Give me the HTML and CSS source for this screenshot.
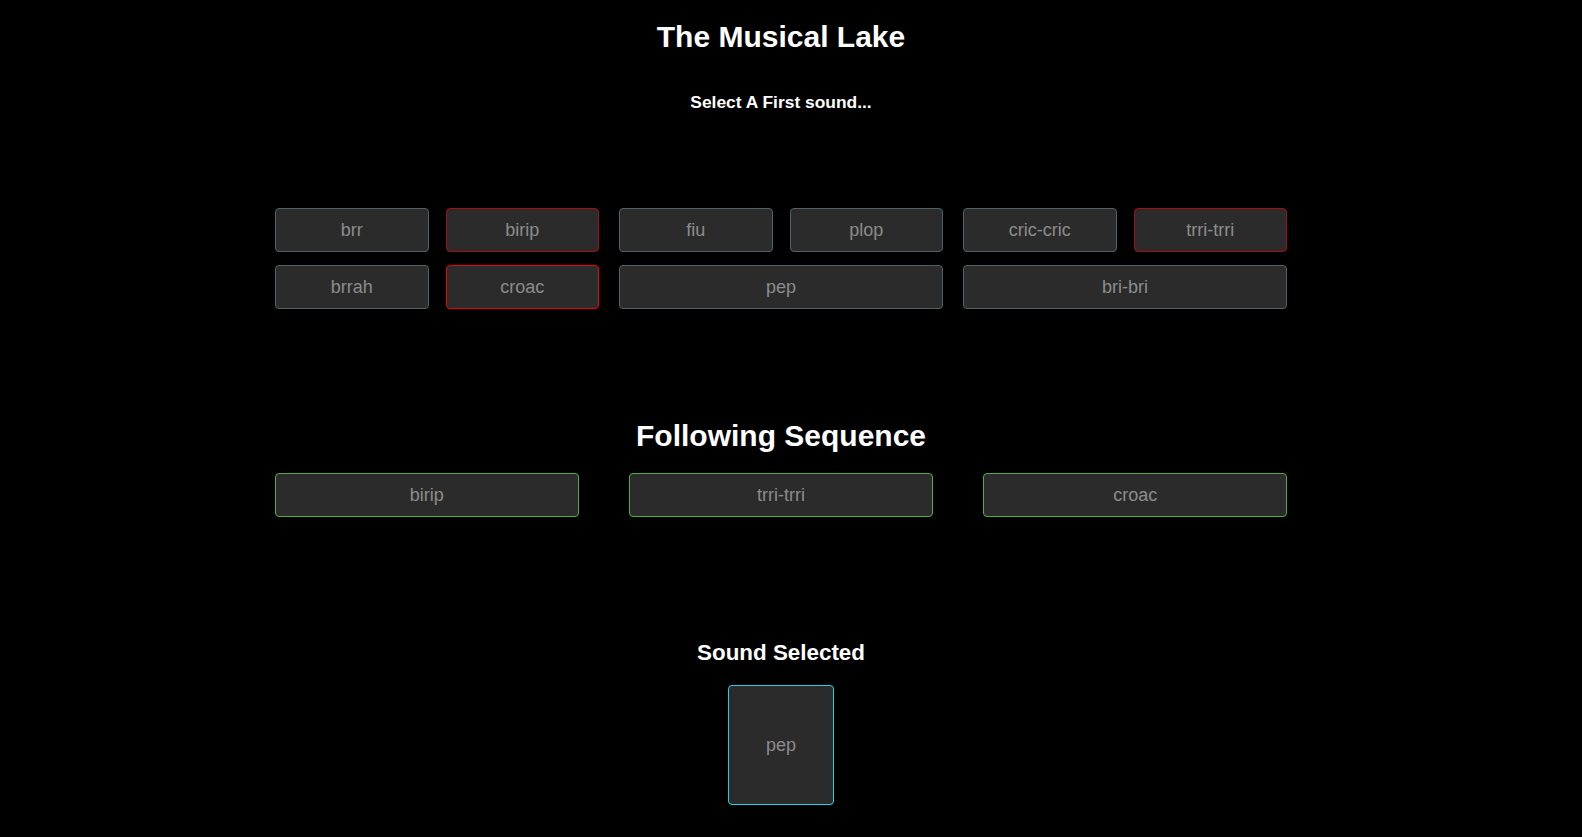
FILE: index.html
```html
<!DOCTYPE html>
<html lang="en">
<head>
<meta charset="utf-8">
<title>The Musical Lake</title>
<link rel="stylesheet" href="styles.css">
</head>
<body>
<main class="page">
  <h1 class="title">The Musical Lake</h1>
  <h4 class="prompt">Select A First sound...</h4>

  <section class="sounds">
    <div class="group">
      <button class="sound">brr</button>
      <button class="sound wrong-dim">birip</button>
      <button class="sound">brrah</button>
      <button class="sound wrong">croac</button>
    </div>
    <div class="group">
      <button class="sound">fiu</button>
      <button class="sound">plop</button>
      <button class="sound wide">pep</button>
    </div>
    <div class="group">
      <button class="sound">cric-cric</button>
      <button class="sound wrong-dim">trri-trri</button>
      <button class="sound wide">bri-bri</button>
    </div>
  </section>

  <h2 class="section-title">Following Sequence</h2>
  <section class="sequence">
    <button class="sound seq">birip</button>
    <button class="sound seq">trri-trri</button>
    <button class="sound seq">croac</button>
  </section>

  <h3 class="selected-title">Sound Selected</h3>
  <div class="selected-wrap">
    <div class="selected">pep</div>
  </div>
</main>
</body>
</html>
```
FILE: styles.css
```css
* { box-sizing: border-box; }

html, body {
  margin: 0;
  background: #000;
}

body {
  padding-right: 20px;
  font-family: "Liberation Sans", Arial, sans-serif;
  color: #fff;
}

.page {
  width: 1012px;
  margin: 0 auto;
  display: flex;
  flex-direction: column;
}

.title {
  margin: 20px 0 0;
  font-size: 30px;
  line-height: 34px;
  font-weight: bold;
  text-align: center;
}

.prompt {
  margin: 38px 0 0;
  font-size: 17.4px;
  line-height: 20px;
  font-weight: bold;
  text-align: center;
}

.sounds {
  margin-top: 96px;
  display: flex;
  gap: 20px;
}

.group {
  flex: 1;
  display: grid;
  grid-template-columns: 1fr 1fr;
  column-gap: 17px;
  row-gap: 13px;
}

.sound {
  height: 44px;
  margin: 0;
  padding: 0;
  background: #2b2b2b;
  border: 1px solid #4e6268;
  border-radius: 4px;
  color: #8c8c8c;
  font-family: "Liberation Sans", Arial, sans-serif;
  font-size: 18px;
  text-align: center;
}

.sound.wide { grid-column: span 2; }
.sound.wrong-dim { border-color: #a80c12; }
.sound.wrong { border-color: #f40000; }
.sound.seq { border-color: #4cb03a; width: 30%; }

.section-title {
  margin: 110px 0 0;
  font-size: 30px;
  line-height: 34px;
  font-weight: bold;
  text-align: center;
}

.sequence {
  margin-top: 20px;
  display: flex;
  justify-content: space-between;
}

.selected-title {
  margin: 123px 0 0;
  font-size: 22.4px;
  line-height: 26px;
  font-weight: bold;
  text-align: center;
}

.selected-wrap {
  margin-top: 19px;
  display: flex;
  justify-content: center;
}

.selected {
  width: 106px;
  height: 120px;
  display: flex;
  align-items: center;
  justify-content: center;
  background: #2b2b2b;
  border: 1px solid #22d3e6;
  border-radius: 4px;
  color: #8c8c8c;
  font-size: 18px;
}
```
